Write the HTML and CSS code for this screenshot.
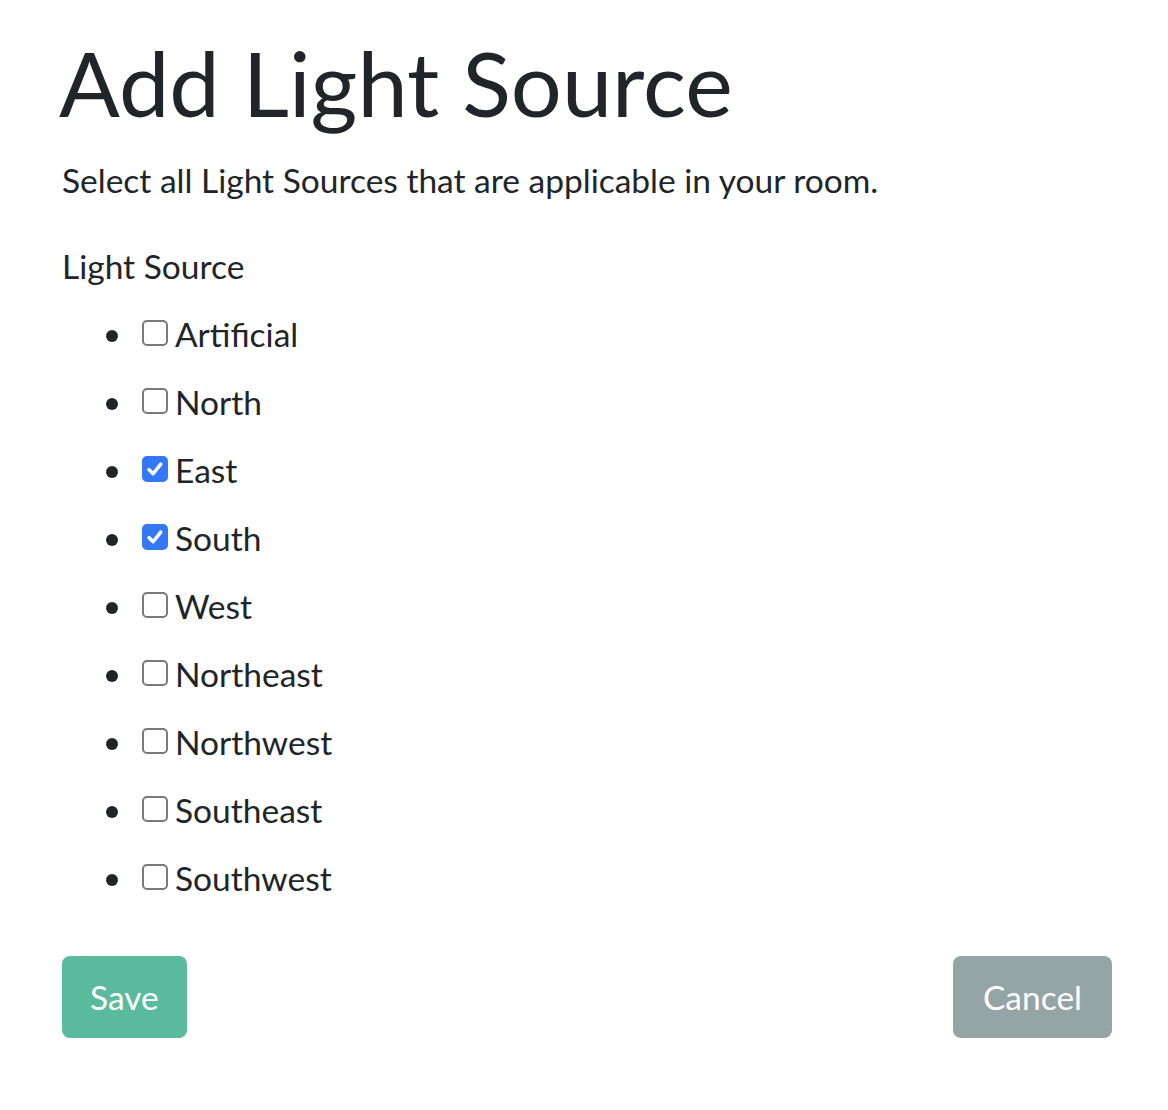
FILE: index.html
```html
<!DOCTYPE html>
<html>
<head>
<meta charset="utf-8">
<link rel="stylesheet" href="styles.css">
</head>
<body>
<main class="page">
  <h1 class="title">Add Light Source</h1>
  <p class="lead">Select all Light Sources that are applicable in your room.</p>
  <div class="field">
    <div class="field-label">Light Source</div>
    <ul class="options">
      <li><label><input type="checkbox" class="check">Artificial</label></li>
      <li><label><input type="checkbox" class="check">North</label></li>
      <li><label><input type="checkbox" class="check" checked>East</label></li>
      <li><label><input type="checkbox" class="check" checked>South</label></li>
      <li><label><input type="checkbox" class="check">West</label></li>
      <li><label><input type="checkbox" class="check">Northeast</label></li>
      <li><label><input type="checkbox" class="check">Northwest</label></li>
      <li><label><input type="checkbox" class="check">Southeast</label></li>
      <li><label><input type="checkbox" class="check">Southwest</label></li>
    </ul>
  </div>
  <div class="actions">
    <button class="btn btn-save">Save</button>
    <button class="btn btn-cancel">Cancel</button>
  </div>
</main>
</body>
</html>
```
FILE: styles.css
```css
html, body {
  margin: 0;
  padding: 0;
  background: #fff;
}
body {
  font-family: Lato, "Open Sans", sans-serif;
  font-size: 33.5px;
  line-height: 50px;
  color: #212529;
}
.page {
  padding: 28px 56px 40px 62px;
}
.title {
  font-size: 90px;
  font-weight: 400;
  line-height: 108px;
  margin: 0 0 19px -3px;
}
.lead {
  margin: 0 0 36px;
}
.field-label {
  margin: 0 0 18px;
}
.options {
  margin: 0;
  padding: 0 0 0 44px;
  list-style: none;
}
.options li {
  display: flex;
  align-items: center;
  margin: 0 0 18px;
}
.options li::before {
  content: "";
  width: 12px;
  height: 12px;
  border-radius: 50%;
  background: #212529;
  margin: 4px 24px 0 0;
  flex: none;
}
.options label {
  display: inline-flex;
  align-items: center;
}
.check {
  -webkit-appearance: none;
  appearance: none;
  width: 26px;
  height: 26px;
  margin: -2px 7px 0 0;
  border: 2px solid #7a7a7a;
  border-radius: 5px;
  background: #fff;
  box-sizing: border-box;
  flex: none;
}
.check:checked {
  border-color: #3478f6;
  background: #3478f6 url("data:image/svg+xml;utf8,<svg xmlns='http://www.w3.org/2000/svg' viewBox='0 0 26 26'><path d='M6 13.8 L10.8 18.6 L19.8 7.2' fill='none' stroke='white' stroke-width='4.2' stroke-linecap='round' stroke-linejoin='round'/></svg>") center/100% 100% no-repeat;
}
.actions {
  display: flex;
  justify-content: space-between;
  margin-top: 53px;
}
.btn {
  font-family: inherit;
  font-size: 33.5px;
  color: #fff;
  border: none;
  border-radius: 8px;
  height: 82px;
  line-height: 50px;
}
.btn-save {
  padding: 0 28px;
  background: #59bb9c;
}
.btn-cancel {
  padding: 0 30px;
  background: #95a5a6;
}
```
